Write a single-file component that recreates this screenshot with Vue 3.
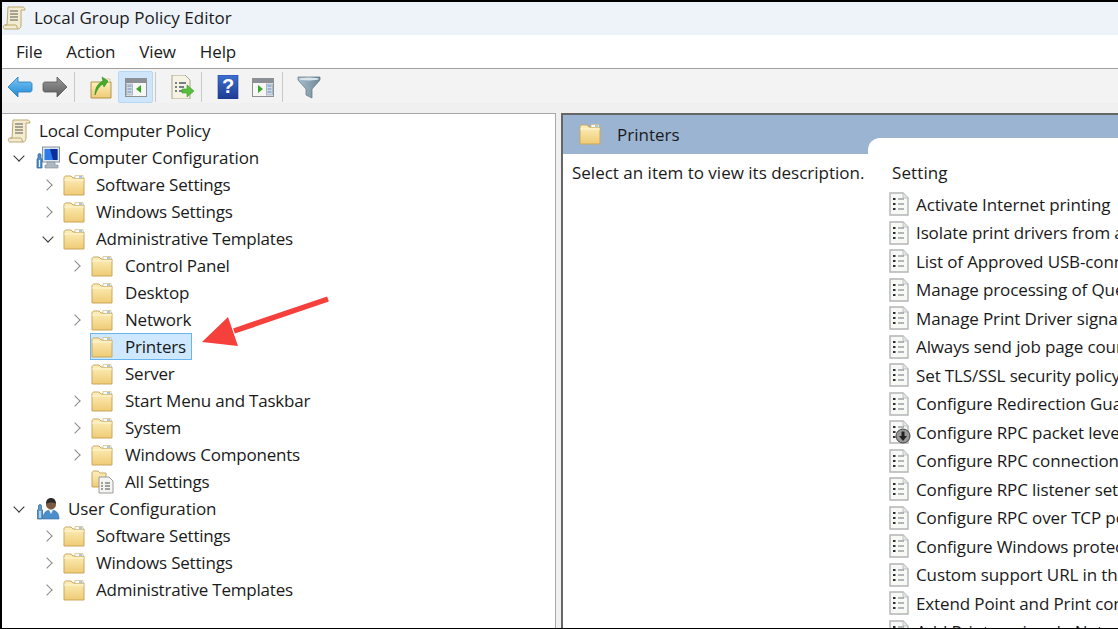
<script setup>
const menus = ['File', 'Action', 'View', 'Help']
const tree = [
  { t: 'Software Settings', l: 1, c: 'r' },
  { t: 'Windows Settings', l: 1, c: 'r' },
  { t: 'Administrative Templates', l: 1, c: 'd' },
  { t: 'Control Panel', l: 2, c: 'r' },
  { t: 'Desktop', l: 2, c: '' },
  { t: 'Network', l: 2, c: 'r' },
  { t: 'Printers', l: 2, c: '', sel: true },
  { t: 'Server', l: 2, c: '' },
  { t: 'Start Menu and Taskbar', l: 2, c: 'r' },
  { t: 'System', l: 2, c: 'r' },
  { t: 'Windows Components', l: 2, c: 'r' },
  { t: 'All Settings', l: 2, c: '', icon: 'all' },
]
const tree2 = [
  { t: 'Software Settings', l: 1, c: 'r' },
  { t: 'Windows Settings', l: 1, c: 'r' },
  { t: 'Administrative Templates', l: 1, c: 'r' },
]
const settings = [
  'Activate Internet printing',
  'Isolate print drivers from applications',
  'List of Approved USB-connected print devices',
  'Manage processing of Queue-specific files',
  'Manage Print Driver signature validation',
  'Always send job page count information',
  'Set TLS/SSL security policy',
  'Configure Redirection Guard',
  'Configure RPC packet level privacy',
  'Configure RPC connection settings',
  'Configure RPC listener settings',
  'Configure RPC over TCP port',
  'Configure Windows protected print',
  'Custom support URL in the Printers folder',
  'Extend Point and Print connection',
  'Add Printer wizard - Network scan',
]
</script>

<template>
  <div class="window">
    <header class="title">
      <svg class="ic" viewBox="0 0 24 24"><use href="#scroll" /></svg>
      <span>Local Group Policy Editor</span>
    </header>
    <nav class="menu">
      <span v-for="m in menus" :key="m">{{ m }}</span>
    </nav>
    <div class="toolbar">
      <button class="tool">
        <svg class="wide" viewBox="0 0 26 24"><path d="M1 12 11 2v5h12c1 0 2 1 2 2v6c0 1-1 2-2 2H11v5z" fill="url(#blue)" stroke="#2a79b8" stroke-width=".8" /></svg>
      </button>
      <button class="tool">
        <svg class="wide" viewBox="0 0 26 24"><path d="M25 12 15 2v5H3c-1 0-2 1-2 2v6c0 1 1 2 2 2h12v5z" fill="url(#grey)" stroke="#555" stroke-width=".8" /></svg>
      </button>
      <i class="sep"></i>
      <button class="tool">
        <svg viewBox="0 0 24 24"><path d="M2 7h20v16H2z" fill="url(#fold)" stroke="#b4934a" /><path d="M14 4h7v3h-7z" fill="#f8f8ee" stroke="#c9b06d" stroke-width=".6" /><path d="M6 20c0-7 3-12 8-14l-1-4 6 4-4 6-1-3c-4 2-6 6-8 11z" fill="#3fae2a" stroke="#2f8a1e" stroke-width=".6" /></svg>
      </button>
      <button class="tool on">
        <svg viewBox="0 0 24 24"><use href="#win" /><rect x="2.5" y="9" width="6" height="11" fill="#cfdbe8" stroke="#8a97a5" stroke-width=".6" /><path d="M3.500 11h4M3.500 14h4M3.500 17h4" stroke="#6d8fb5" /><path d="M17 10v8l-5-4z" fill="#3aa52b" /></svg>
      </button>
      <i class="sep"></i>
      <button class="tool">
        <svg viewBox="0 0 24 24"><path d="M2 0h13l5 5v19H2z" fill="#f6f3e4" stroke="#a9a68f" /><path d="M5 8h2M9 8h7M5 12h2M9 12h5M5 16h2M9 16h5" stroke="#4c5a6a" stroke-width="1.300" /><path d="M12 14h5v-4l7 6-7 6v-4h-5z" fill="#58bf3c" stroke="#3a9a28" stroke-width=".6" /></svg>
      </button>
      <i class="sep"></i>
      <button class="tool">
        <svg viewBox="0 0 24 24"><rect x="2" y="0" width="20" height="24" fill="url(#help)" stroke="#1c3f92" stroke-width=".6" /><text x="12" y="18" text-anchor="middle" class="q">?</text></svg>
      </button>
      <button class="tool">
        <svg viewBox="0 0 24 24"><use href="#win" /><rect x="15.500" y="9" width="6" height="11" fill="#cfdbe8" stroke="#8a97a5" stroke-width=".6" /><path d="M16.500 11h4M16.500 14h4M16.500 17h4" stroke="#6d8fb5" /><path d="M7 10v8l5-4z" fill="#3aa52b" /></svg>
      </button>
      <i class="sep"></i>
      <button class="tool">
        <svg viewBox="0 0 24 24"><path d="M1 2h22v3l-8 9v9l-6-3v-6L1 5z" fill="url(#funnel)" stroke="#5f7381" stroke-width=".7" /><ellipse cx="12" cy="4" rx="10" ry="1.500" fill="#dbe6ec" /></svg>
      </button>
    </div>

    <main class="panes">
      <section class="left">
        <div class="row l0">
          <svg class="ic" viewBox="0 0 24 24"><use href="#scroll" /></svg>
          <span class="label">Local Computer Policy</span>
        </div>
        <div class="row lr">
          <b class="chev d"></b>
          <svg class="ic" viewBox="0 0 24 24"><use href="#computer" /></svg>
          <span class="label">Computer Configuration</span>
        </div>
        <div v-for="n in tree" :key="n.t" class="row" :class="'lv' + n.l">
          <b class="chev" :class="n.c"></b>
          <span class="node" :class="{ sel: n.sel }">
            <svg class="ic" viewBox="0 0 24 24"><use :href="n.icon === 'all' ? '#allset' : '#folder'" /></svg>
            <span class="label">{{ n.t }}</span>
          </span>
        </div>
        <div class="row lr">
          <b class="chev d"></b>
          <svg class="ic" viewBox="0 0 24 24"><use href="#user" /></svg>
          <span class="label">User Configuration</span>
        </div>
        <div v-for="n in tree2" :key="'u' + n.t" class="row lv1">
          <b class="chev r"></b>
          <span class="node">
            <svg class="ic" viewBox="0 0 24 24"><use href="#folder" /></svg>
            <span class="label">{{ n.t }}</span>
          </span>
        </div>
      </section>

      <section class="right">
        <div class="head">
          <svg class="ic" viewBox="0 0 24 24"><use href="#folder" /></svg>
          <span>Printers</span>
        </div>
        <div class="body">
          <p class="desc">Select an item to view its description.</p>
          <div class="list">
            <div class="col">Setting</div>
            <div v-for="(s, i) in settings" :key="s" class="item">
              <svg class="ic" viewBox="0 0 24 24">
                <use href="#policy" />
                <g v-if="i === 8"><circle cx="16" cy="16" r="7" fill="#9a9a9a" stroke="#444" /><path d="M14.500 11.500h3v4.500h2.500L16 21l-4-5h2.500z" fill="#222" /></g>
              </svg>
              <span>{{ s }}</span>
            </div>
          </div>
        </div>
      </section>
    </main>

    <svg class="arrow" width="1118" height="629" viewBox="0 0 1118 629">
      <defs>
        <linearGradient id="fold" x1="0" y1="0" x2="0" y2="1"><stop offset="0" stop-color="#fdf0bd" /><stop offset="1" stop-color="#efcb75" /></linearGradient>
        <linearGradient id="blue" x1="0" y1="0" x2="0" y2="1"><stop offset="0" stop-color="#7cc6f4" /><stop offset="1" stop-color="#1e88d6" /></linearGradient>
        <linearGradient id="grey" x1="0" y1="0" x2="0" y2="1"><stop offset="0" stop-color="#9a9a9a" /><stop offset="1" stop-color="#5c5c5c" /></linearGradient>
        <linearGradient id="help" x1="0" y1="0" x2="0" y2="1"><stop offset="0" stop-color="#3f6fd0" /><stop offset="1" stop-color="#1d3c91" /></linearGradient>
        <linearGradient id="funnel" x1="0" y1="0" x2="1" y2="0"><stop offset="0" stop-color="#a7c0cd" /><stop offset="1" stop-color="#6d8796" /></linearGradient>
        <symbol id="folder" viewBox="0 0 24 24">
          <path d="M2 5c0-1 1-2 2-2h5l2 2h11v17H2z" fill="url(#fold)" stroke="#c9a75c" stroke-width="1" />
          <path d="M13 2.500h8v3h-8z" fill="#fbfaf0" stroke="#c9b06d" stroke-width=".6" />
          <path d="M17 3.500h3v1h-3z" fill="#4d9ad6" />
          <path d="M2 7h20" stroke="#fff6d4" />
        </symbol>
        <symbol id="scroll" viewBox="0 0 24 24">
          <path d="M6 1h14c2 0 3 1 3 3h-4v15c0 2-1 4-3 4H3c-2 0-2.500-4 0-4h2z" fill="#f4ecd0" stroke="#bba670" />
          <path d="M8 5h8M8 8h8M8 11h8M8 14h8" stroke="#5a5a55" stroke-width="1.100" />
          <path d="M3 19h11c1 0 1 4 2 4" fill="none" stroke="#bba670" />
        </symbol>
        <symbol id="computer" viewBox="0 0 24 24">
          <rect x="6.500" y="1" width="17" height="15" fill="#dfe7ef" stroke="#8795a3" />
          <rect x="8.500" y="3" width="13" height="11" fill="#2d7bea" />
          <path d="M14 3h7.500v11H17z" fill="#0b2f9a" />
          <path d="M11 16h8v3h3v3H9v-3h2z" fill="#aeb8c2" stroke="#7f8a95" stroke-width=".6" />
          <path d="M2 9c0-2 3-2 3 0v3l1 1v9H1v-9l1-1z" fill="#4d90c8" stroke="#295f90" stroke-width=".7" />
          <path d="M3.500 14v7" stroke="#eaf4fb" stroke-width="1.200" />
        </symbol>
        <symbol id="user" viewBox="0 0 24 24">
          <path d="M7 22c0-6 3-9 8-9s8 3 8 9z" fill="#4c8ec9" stroke="#2f6aa3" stroke-width=".6" />
          <path d="M13 13h4l-2 4z" fill="#eef3f8" />
          <circle cx="15" cy="7.500" r="5" fill="#7b5a41" />
          <path d="M10 7c0-4 2-6 5-6s5 2 5 6c-2-2-7-2-10 0z" fill="#2d2a28" />
          <path d="M2.500 9c0-2 3-2 3 0v3l1 1v9H1.500v-9l1-1z" fill="#5b9bd0" stroke="#295f90" stroke-width=".7" />
          <path d="M4 14v7" stroke="#eaf4fb" stroke-width="1.200" />
        </symbol>
        <symbol id="policy" viewBox="0 0 24 24">
          <path d="M3 1h13l5 5v17H3z" fill="#f8f8f5" stroke="#b2b5b5" stroke-width="1.400" />
          <path d="M16 1v5h5" fill="#e4e6e6" stroke="#b2b5b5" stroke-width=".7" />
          <path d="M6 7h2.500M6 12h2.500M6 17h2.500" stroke="#2a2f36" stroke-width="2.200" />
          <path d="M11 7h6M11 12h6M11 17h6" stroke="#6b7480" stroke-width="1.200" />
        </symbol>
        <symbol id="win" viewBox="0 0 24 24">
          <rect x="1.500" y="3.500" width="21" height="18" fill="#f7f7f5" stroke="#8d9196" />
          <rect x="2" y="4" width="20" height="4" fill="#8b9097" />
        </symbol>
        <symbol id="allset" viewBox="0 0 24 24">
          <path d="M2 3c0-1 1-2 2-2h4l2 2h6v14H2z" fill="url(#fold)" stroke="#c9a75c" />
          <path d="M9 7h10l4 4v12H9z" fill="#f4f4f2" stroke="#9b9b9b" />
          <path d="M11 13h2M15 13h5M11 16h2M15 16h5M11 19h2M15 19h5" stroke="#4a4a4a" stroke-width="1.200" />
        </symbol>
      </defs>
      <path d="M328 299 234 331" stroke="#f5403c" stroke-width="5.500" fill="none" />
      <path d="M202 342 228 317 238 346z" fill="#f5403c" />
    </svg>
  </div>
</template>

<style>
html, body { margin: 0; overflow: hidden; background: #fff; }
</style>

<style scoped>
.window {
  position: relative;
  box-sizing: border-box;
  width: 1118px;
  height: 629px;
  display: flex;
  flex-direction: column;
  overflow: hidden;
  background: #f0f0f0;
  border-top: 2px solid #000;
  border-left: 2px solid #000;
  border-bottom: 1px solid #000;
  font-family: "Open Sans", "Noto Sans", sans-serif;
  font-size: 17px;
  color: #1a1a1a;
}
.ic { width: 24px; height: 24px; flex: none; }
.title {
  height: 33px;
  flex: none;
  display: flex;
  align-items: center;
  gap: 8px;
  padding-bottom: 2px;
  box-sizing: border-box;
  background: #eef3fa;
}
.menu {
  height: 33px;
  flex: none;
  display: flex;
  align-items: center;
  gap: 24px;
  padding-left: 14px;
  letter-spacing: -0.15px;
  background: #fff;
  border-bottom: 1px solid #a0a0a0;
}
.toolbar {
  height: 34px;
  flex: none;
  display: flex;
  align-items: flex-end;
  background: #f3f3f3;
}
.tool {
  width: 35px;
  height: 32px;
  padding: 0;
  display: flex;
  align-items: center;
  justify-content: center;
  box-sizing: border-box;
  border: 1px solid transparent;
  border-radius: 2px;
  background: none;
}
.tool svg { width: 24px; height: 24px; display: block; }
.tool svg.wide { width: 26px; }
.tool.on { background: #cfe6fa; border-color: #b5d8f5; }
.sep { width: 1px; height: 30px; background: #c8c8c8; margin: 0 8px 1px 2px; }
.q { font: bold 20px "Liberation Sans", sans-serif; fill: #fff; }
.panes {
  flex: 1;
  display: flex;
  min-height: 0;
  gap: 5px;
  padding-top: 10px;
}
.left {
  width: 554px;
  flex: none;
  box-sizing: border-box;
  background: #fff;
  border-top: 1px solid #a8a8a8;
  border-right: 1px solid #a8a8a8;
  padding-top: 3px;
  letter-spacing: -0.2px;
}
.row {
  height: 27px;
  display: flex;
  align-items: center;
  white-space: nowrap;
}
.row.l0 { padding-left: 5px; gap: 8px; }
.row.lr { padding-left: 10px; }
.row.lr .ic { margin-left: 10px; }
.row.lr .label { margin-left: 8px; letter-spacing: -0.08px; }
.row.lv1 { padding-left: 39px; }
.row.lv2 { padding-left: 67px; }
.chev { width: 14px; height: 14px; flex: none; position: relative; display: block; }
.chev.r::after, .chev.d::after {
  content: "";
  position: absolute;
  left: 2px;
  top: 3px;
  width: 7px;
  height: 7px;
  border-right: 1.5px solid #8a8a8a;
  border-bottom: 1.5px solid #8a8a8a;
  transform: rotate(-45deg);
}
.chev.d::after {
  left: 3px;
  top: 1px;
  border-color: #333;
  transform: rotate(45deg);
}
.node {
  display: flex;
  align-items: center;
  gap: 11px;
  height: 27px;
  box-sizing: border-box;
  padding: 0 5px 0 0;
  margin-left: 7px;
  border: 1px solid transparent;
}
.row.lv1 .node { gap: 10px; }
.node .ic { margin-left: -1px; }
.node.sel { background: #cde8ff; border-color: #6ab5ec; }
.label { line-height: 25px; }
.right {
  flex: 1;
  min-width: 0;
  display: flex;
  flex-direction: column;
  background: #fff;
  border-top: 2px solid #666;
  border-left: 2px solid #666;
  position: relative;
  overflow: hidden;
}
.head {
  height: 39px;
  flex: none;
  display: flex;
  align-items: center;
  gap: 15px;
  padding-left: 15px;
  padding-bottom: 1px;
  box-sizing: border-box;
  background: #9ab4d2;
}
.body {
  flex: 1;
  display: flex;
  min-height: 0;
}
.desc {
  width: 305px;
  flex: none;
  box-sizing: border-box;
  margin: 0;
  padding: 7px 0 0 9px;
  white-space: nowrap;
  background: #fff;
}
.list {
  flex: 1;
  min-width: 0;
  margin-top: -16px;
  background: #fff;
  border-top-left-radius: 12px;
  overflow: hidden;
  white-space: nowrap;
  letter-spacing: -0.12px;
  position: relative;
}
.col { height: 52px; box-sizing: border-box; padding: 23px 0 0 24px; letter-spacing: 0.1px; }
.item {
  height: 28.5px;
  display: flex;
  align-items: center;
  gap: 5px;
  padding-left: 19px;
}
.arrow { position: absolute; left: -2px; top: -2px; pointer-events: none; }
</style>
